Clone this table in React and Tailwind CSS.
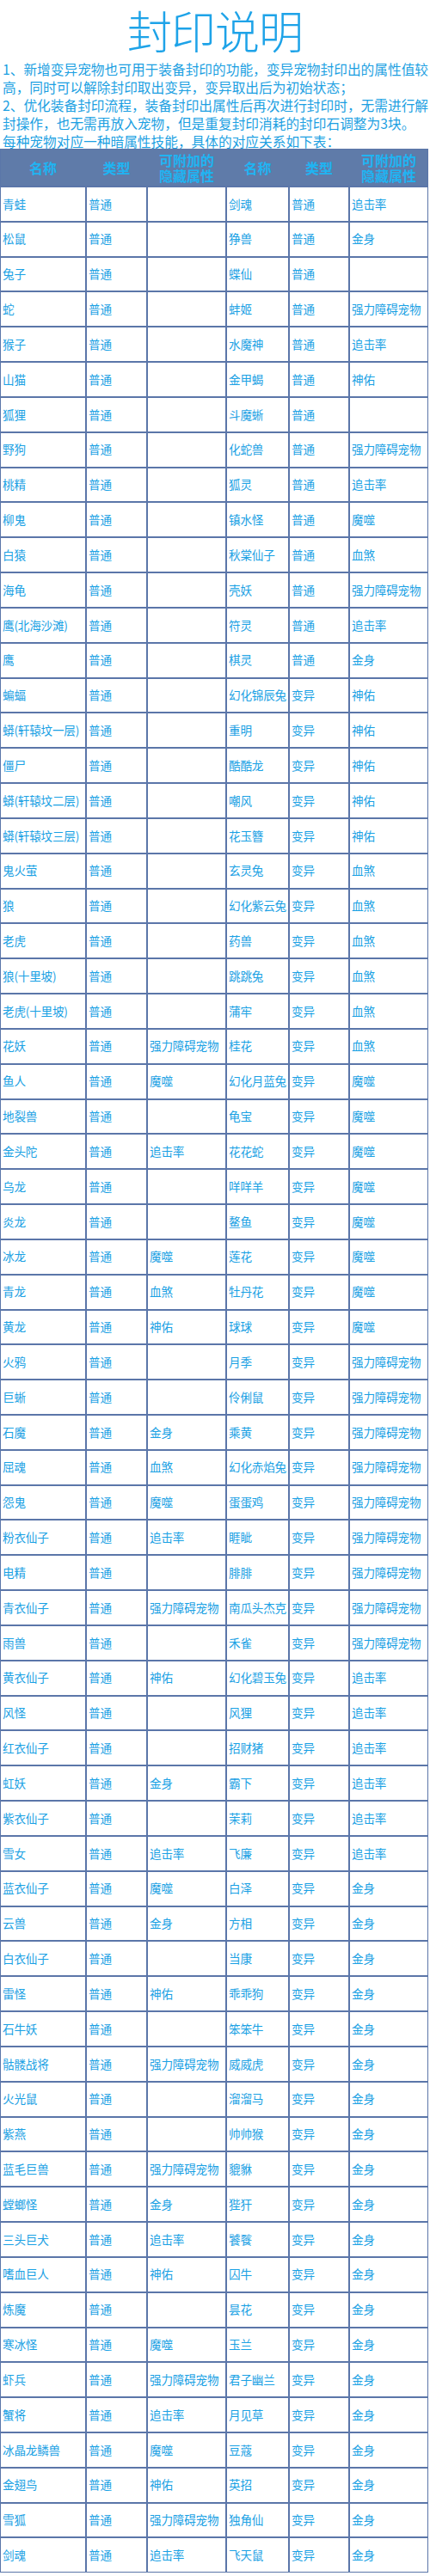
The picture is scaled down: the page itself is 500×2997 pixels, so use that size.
import React from "react";

const rows = [
  ["青蛙", "普通", "", "剑魂", "普通", "追击率"],
  ["松鼠", "普通", "", "狰兽", "普通", "金身"],
  ["兔子", "普通", "", "蝶仙", "普通", ""],
  ["蛇", "普通", "", "蚌姬", "普通", "强力障碍宠物"],
  ["猴子", "普通", "", "水魔神", "普通", "追击率"],
  ["山猫", "普通", "", "金甲蝎", "普通", "神佑"],
  ["狐狸", "普通", "", "斗魔蜥", "普通", ""],
  ["野狗", "普通", "", "化蛇兽", "普通", "强力障碍宠物"],
  ["桃精", "普通", "", "狐灵", "普通", "追击率"],
  ["柳鬼", "普通", "", "镇水怪", "普通", "魔噬"],
  ["白猿", "普通", "", "秋棠仙子", "普通", "血煞"],
  ["海龟", "普通", "", "壳妖", "普通", "强力障碍宠物"],
  ["鹰(北海沙滩)", "普通", "", "符灵", "普通", "追击率"],
  ["鹰", "普通", "", "棋灵", "普通", "金身"],
  ["蝙蝠", "普通", "", "幻化锦辰兔", "变异", "神佑"],
  ["蟒(轩辕坟一层)", "普通", "", "重明", "变异", "神佑"],
  ["僵尸", "普通", "", "酷酷龙", "变异", "神佑"],
  ["蟒(轩辕坟二层)", "普通", "", "嘲风", "变异", "神佑"],
  ["蟒(轩辕坟三层)", "普通", "", "花玉簪", "变异", "神佑"],
  ["鬼火萤", "普通", "", "玄灵兔", "变异", "血煞"],
  ["狼", "普通", "", "幻化紫云兔", "变异", "血煞"],
  ["老虎", "普通", "", "药兽", "变异", "血煞"],
  ["狼(十里坡)", "普通", "", "跳跳兔", "变异", "血煞"],
  ["老虎(十里坡)", "普通", "", "蒲牢", "变异", "血煞"],
  ["花妖", "普通", "强力障碍宠物", "桂花", "变异", "血煞"],
  ["鱼人", "普通", "魔噬", "幻化月蓝兔", "变异", "魔噬"],
  ["地裂兽", "普通", "", "龟宝", "变异", "魔噬"],
  ["金头陀", "普通", "追击率", "花花蛇", "变异", "魔噬"],
  ["乌龙", "普通", "", "咩咩羊", "变异", "魔噬"],
  ["炎龙", "普通", "", "鳌鱼", "变异", "魔噬"],
  ["冰龙", "普通", "魔噬", "莲花", "变异", "魔噬"],
  ["青龙", "普通", "血煞", "牡丹花", "变异", "魔噬"],
  ["黄龙", "普通", "神佑", "球球", "变异", "魔噬"],
  ["火鸦", "普通", "", "月季", "变异", "强力障碍宠物"],
  ["巨蜥", "普通", "", "伶俐鼠", "变异", "强力障碍宠物"],
  ["石魔", "普通", "金身", "乘黄", "变异", "强力障碍宠物"],
  ["屈魂", "普通", "血煞", "幻化赤焰兔", "变异", "强力障碍宠物"],
  ["怨鬼", "普通", "魔噬", "蛋蛋鸡", "变异", "强力障碍宠物"],
  ["粉衣仙子", "普通", "追击率", "睚眦", "变异", "强力障碍宠物"],
  ["电精", "普通", "", "腓腓", "变异", "强力障碍宠物"],
  ["青衣仙子", "普通", "强力障碍宠物", "南瓜头杰克", "变异", "强力障碍宠物"],
  ["雨兽", "普通", "", "禾雀", "变异", "强力障碍宠物"],
  ["黄衣仙子", "普通", "神佑", "幻化碧玉兔", "变异", "追击率"],
  ["风怪", "普通", "", "风狸", "变异", "追击率"],
  ["红衣仙子", "普通", "", "招财猪", "变异", "追击率"],
  ["虹妖", "普通", "金身", "霸下", "变异", "追击率"],
  ["紫衣仙子", "普通", "", "茉莉", "变异", "追击率"],
  ["雪女", "普通", "追击率", "飞廉", "变异", "追击率"],
  ["蓝衣仙子", "普通", "魔噬", "白泽", "变异", "金身"],
  ["云兽", "普通", "金身", "方相", "变异", "金身"],
  ["白衣仙子", "普通", "", "当康", "变异", "金身"],
  ["雷怪", "普通", "神佑", "乖乖狗", "变异", "金身"],
  ["石牛妖", "普通", "", "笨笨牛", "变异", "金身"],
  ["骷髅战将", "普通", "强力障碍宠物", "威威虎", "变异", "金身"],
  ["火光鼠", "普通", "", "溜溜马", "变异", "金身"],
  ["紫燕", "普通", "", "帅帅猴", "变异", "金身"],
  ["蓝毛巨兽", "普通", "强力障碍宠物", "貔貅", "变异", "金身"],
  ["螳螂怪", "普通", "金身", "狴犴", "变异", "金身"],
  ["三头巨犬", "普通", "追击率", "饕餮", "变异", "金身"],
  ["嗜血巨人", "普通", "神佑", "囚牛", "变异", "金身"],
  ["炼魔", "普通", "", "昙花", "变异", "金身"],
  ["寒冰怪", "普通", "魔噬", "玉兰", "变异", "金身"],
  ["虾兵", "普通", "强力障碍宠物", "君子幽兰", "变异", "金身"],
  ["蟹将", "普通", "追击率", "月见草", "变异", "金身"],
  ["冰晶龙鳞兽", "普通", "魔噬", "豆蔻", "变异", "金身"],
  ["金翅鸟", "普通", "神佑", "英招", "变异", "金身"],
  ["雪狐", "普通", "强力障碍宠物", "独角仙", "变异", "金身"],
  ["剑魂", "普通", "追击率", "飞天鼠", "变异", "金身"],
];

const font = { fontFamily: '"Noto Sans CJK SC", "Noto Sans", sans-serif' };

function HeaderCell({ children }) {
  return (
    <div className="flex h-[42px] items-center justify-center text-center text-[16px] font-bold leading-[18px] text-[#20b4f2]">
      {children}
    </div>
  );
}

export default function App() {
  return (
    <div className="w-[500px] bg-white" style={font}>
      <div className="flex h-[70px] items-center justify-center">
        <h1 className="text-[52px] font-extralight leading-none tracking-[-1px] text-[#1ea3e8]">
          封印说明
        </h1>
      </div>
      <div className="pl-[3px] text-[15.7px] leading-[21px] text-[#1c9fe2] whitespace-nowrap">
        <p>
          1、新增变异宠物也可用于装备封印的功能，变异宠物封印出的属性值较
          <br />
          高，同时可以解除封印取出变异，变异取出后为初始状态；
        </p>
        <p>
          2、优化装备封印流程，装备封印出属性后再次进行封印时，无需进行解
          <br />
          封操作，也无需再放入宠物，但是重复封印消耗的封印石调整为3块。
        </p>
        <p>每种宠物对应一种暗属性技能，具体的对应关系如下表：</p>
      </div>
      <div className="mt-[-2px] flex w-[498px] flex-col gap-[2px] bg-[#5b76a9] p-[1px]">
        <div className="grid grid-cols-[98px_69px_90px_71px_68px_90px] gap-x-[2px] bg-[#5f7ba9]">
          <HeaderCell>名称</HeaderCell>
          <HeaderCell>类型</HeaderCell>
          <HeaderCell>
            可附加的
            <br />
            隐藏属性
          </HeaderCell>
          <HeaderCell>名称</HeaderCell>
          <HeaderCell>类型</HeaderCell>
          <HeaderCell>
            可附加的
            <br />
            隐藏属性
          </HeaderCell>
        </div>
        <div className="grid grid-cols-[98px_69px_90px_71px_68px_90px] gap-[2px]">
          {rows.map((r, i) =>
            r.map((c, j) => (
              <div
                key={i + "-" + j}
                className="flex h-[38.83px] items-center overflow-hidden whitespace-nowrap bg-white pl-[2px] text-[13.6px] leading-none tracking-[-0.2px] text-[#1aa1e4]"
              >
                {c}
              </div>
            ))
          )}
        </div>
      </div>
    </div>
  );
}
